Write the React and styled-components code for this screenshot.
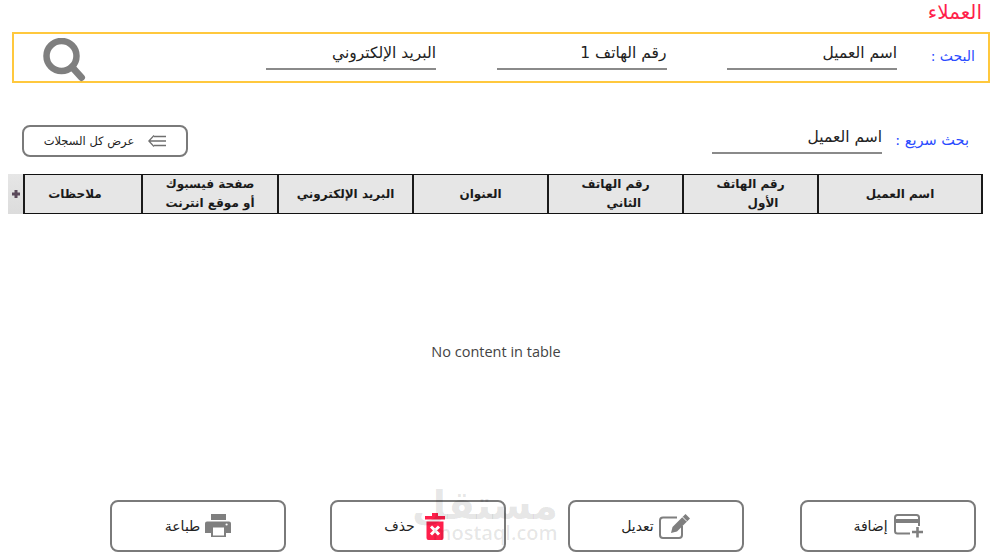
import React from "react";
import styled, { createGlobalStyle } from "styled-components";

const GlobalStyle = createGlobalStyle`
  html, body {
    margin: 0;
    padding: 0;
    background: #fff;
  }
  body {
    font-family: "DejaVu Sans", "Open Sans", sans-serif;
  }
`;

const columns = [
  ["اسم العميل"],
  ["رقم الهاتف", "الأول\u00a0\u00a0\u00a0\u00a0\u00a0\u00a0"],
  ["رقم الهاتف", "الثاني\u00a0\u00a0\u00a0\u00a0"],
  ["العنوان"],
  ["البريد الإلكتروني"],
  ["صفحة فيسبوك", "أو موقع انترنت"],
  ["ملاحظات"],
];

function SearchIcon() {
  return (
    <svg width="44" height="44" viewBox="0 0 44 44">
      <circle cx="18.5" cy="18" r="15" fill="none" stroke="#7f7f7f" strokeWidth="6.5" />
      <path d="M29 29 L38.5 39.5" stroke="#7f7f7f" strokeWidth="7" strokeLinecap="round" />
    </svg>
  );
}

function ListIcon() {
  return (
    <svg width="18" height="12" viewBox="0 0 18 12">
      <path d="M6 0.5 L0.8 6 L6 11.5 M0.8 6 H18 M6 1.5 H18 M6 10.5 H18" fill="none" stroke="#6f6f6f" strokeWidth="1.3" />
    </svg>
  );
}

function PlusIcon() {
  return (
    <svg width="8" height="8" viewBox="0 0 8 8">
      <path d="M4 0 V8 M0 4 H8" stroke="#5b4a5b" strokeWidth="3" />
    </svg>
  );
}

function PrintIcon() {
  return (
    <svg width="26" height="24" viewBox="0 0 26 24">
      <path fill="#7f7f7f" d="M6 0 H21 V6 H6 Z M2 7.5 H24 Q26 7.5 26 9.5 V19 H21 V23 H6 V19 H0 V9.5 Q0 7.5 2 7.5 Z" />
      <rect x="8" y="13.5" width="11" height="8" fill="#fff" />
      <circle cx="21.6" cy="10.5" r="1.1" fill="#fff" />
    </svg>
  );
}

function TrashIcon() {
  return (
    <svg width="20" height="27" viewBox="0 0 20 27">
      <path fill="#ff1f4b" d="M7 0 H13 V3 H20 V6.5 H0 V3 H7 Z M1.5 8.5 H18.5 V25 Q18.5 27 16.5 27 H3.5 Q1.5 27 1.5 25 Z" />
      <path d="M6 13.5 L14 21.5 M14 13.5 L6 21.5" stroke="#fff" strokeWidth="3" />
    </svg>
  );
}

function EditIcon() {
  return (
    <svg width="32" height="25" viewBox="0 0 32 25">
      <path d="M18 3.5 H4 Q1 3.5 1 6.5 V21 Q1 24 4 24 H20 Q23 24 23 21 V12" fill="none" stroke="#7f7f7f" strokeWidth="2" />
      <path fill="#7f7f7f" d="M12 19 L13.5 13 L26.5 0 L31 4.5 L18 17.5 Z" />
      <path d="M23.5 3 L28 7.5" stroke="#fff" strokeWidth="1" />
    </svg>
  );
}

function AddIcon() {
  return (
    <svg width="30" height="24" viewBox="0 0 30 24">
      <rect x="2" y="1" width="24" height="18.5" rx="2.5" fill="none" stroke="#7f7f7f" strokeWidth="2" />
      <rect x="2" y="5" width="24" height="4" fill="#7f7f7f" />
      <rect x="17" y="12" width="13" height="12" fill="#fff" />
      <path d="M24.5 13 V23.5 M19 18 H30" stroke="#7f7f7f" strokeWidth="2.6" />
    </svg>
  );
}

function App() {
  return (
    <Page dir="rtl">
      <GlobalStyle />
      <Title>العملاء</Title>

      <SearchBox>
        <SearchLabel>البحث :</SearchLabel>
        <Field>اسم العميل</Field>
        <Field>رقم الهاتف 1</Field>
        <Field>البريد الإلكتروني</Field>
        <SearchButton>
          <SearchIcon />
        </SearchButton>
      </SearchBox>

      <QuickRow>
        <QuickLabel>بحث سريع :</QuickLabel>
        <QuickField>اسم العميل</QuickField>
        <ShowAll>
          <ListIcon />
          عرض كل السجلات
        </ShowAll>
      </QuickRow>

      <TableHead>
        {columns.map((lines) => (
          <HeadCell key={lines.join()}>
            {lines.map((line) => (
              <div key={line}>{line}</div>
            ))}
          </HeadCell>
        ))}
        <ExpandCell>
          <PlusIcon />
        </ExpandCell>
      </TableHead>

      <EmptyText dir="ltr">No content in table</EmptyText>

      <Actions>
        <ActionButton $after={56}>
          <AddIcon />
          إضافة
        </ActionButton>
        <ActionButton $after={62}>
          <EditIcon />
          تعديل
        </ActionButton>
        <ActionButton $after={44} $gap={10} $inset={13}>
          <TrashIcon />
          حذف
        </ActionButton>
        <ActionButton>
          <PrintIcon />
          طباعة
        </ActionButton>
      </Actions>

      <Watermark>
        <WatermarkWord>مستقل</WatermarkWord>
        <WatermarkSite dir="ltr">mostaql.com</WatermarkSite>
      </Watermark>
    </Page>
  );
}

const Page = styled.div`
  position: relative;
  width: 992px;
  height: 556px;
  overflow: hidden;
  color: #222;
`;

const Title = styled.h1`
  height: 32px;
  margin: 0;
  padding-right: 10px;
  font-size: 20px;
  font-weight: 400;
  line-height: 24px;
  color: #ff1f4b;
`;

const SearchBox = styled.div`
  display: flex;
  align-items: flex-start;
  gap: 60.5px;
  height: 47px;
  margin: 0 2px 0 12px;
  padding-right: 91px;
  border: 2px solid #ffc83d;
  position: relative;
`;

const SearchLabel = styled.span`
  position: absolute;
  right: 13px;
  top: 14px;
  font-size: 14px;
  color: #2a4bff;
`;

const Field = styled.div`
  width: 170px;
  height: 36px;
  box-sizing: border-box;
  padding-top: 9px;
  border-bottom: 2px solid #8a8a8a;
  font-size: 15.5px;
  line-height: 20px;
  color: #222;
`;

const QuickField = styled(Field)`
  height: 29px;
  padding-top: 2px;
`;

const SearchButton = styled.div`
  margin-right: auto;
  margin-left: 29px;
  margin-top: 4px;
  line-height: 0;
`;

const QuickRow = styled.div`
  display: flex;
  align-items: flex-start;
  height: 32px;
  margin: 42px 23px 0 22px;
`;

const QuickLabel = styled.span`
  width: 72px;
  flex: none;
  margin: 7px 0 0 15px;
  font-size: 14.5px;
  white-space: nowrap;
  color: #2a4bff;
`;

const ShowAll = styled.button`
  display: flex;
  align-items: center;
  justify-content: center;
  gap: 14px;
  width: 166px;
  height: 32px;
  margin-right: auto;
  border: 2px solid #7a7a7a;
  border-radius: 8px;
  background: #fff;
  font: 11.5px "DejaVu Sans", sans-serif;
  color: #222;
`;

const TableHead = styled.div`
  display: grid;
  grid-template-columns: 166px 135px 135px 135px 135px 136px 118px 15px;
  grid-template-rows: 40px;
  margin: 17px 9px 0 0;
`;

const HeadCell = styled.div`
  display: flex;
  flex-direction: column;
  align-items: center;
  justify-content: center;
  box-sizing: border-box;
  border-top: 1px solid #111;
  border-bottom: 1px solid #111;
  border-left: 2px solid #1a1a1a;
  background: #e6e6e6;
  font-size: 12px;
  font-weight: 700;
  line-height: 19px;
  color: #1a1a1a;
  &:first-child {
    border-right: 2px solid #1a1a1a;
  }
  &:nth-child(7) {
    padding-right: 16px;
  }
`;

const ExpandCell = styled.div`
  display: flex;
  align-items: center;
  justify-content: center;
  background: linear-gradient(#e6e6e6, #dcdcdc);
`;

const EmptyText = styled.div`
  margin-top: 128px;
  text-align: center;
  font-family: "Open Sans", sans-serif;
  font-size: 14.5px;
  line-height: 20px;
  color: #444;
`;

const Actions = styled.div`
  display: flex;
  margin: 138px 16px 0 0;
`;

const ActionButton = styled.button`
  display: flex;
  align-items: center;
  justify-content: center;
  gap: ${(props) => props.$gap || 5}px;
  width: 176px;
  height: 52px;
  margin-left: ${(props) => props.$after || 0}px;
  padding: 0 ${(props) => props.$inset || 6}px 0 6px;
  border: 2px solid #7a7a7a;
  border-radius: 8px;
  background: transparent;
  font: 14px "DejaVu Sans", sans-serif;
  color: #222;
`;

const Watermark = styled.div`
  position: absolute;
  left: 432px;
  top: 482px;
  width: 126px;
  color: rgba(0, 0, 0, 0.1);
  text-align: center;
  pointer-events: none;
`;

const WatermarkWord = styled.div`
  height: 40px;
  font-size: 40px;
  font-weight: 700;
  line-height: 46px;
`;

const WatermarkSite = styled.div`
  font-family: "Open Sans", sans-serif;
  font-size: 20px;
  font-weight: 600;
  line-height: 22px;
`;

export default App;
